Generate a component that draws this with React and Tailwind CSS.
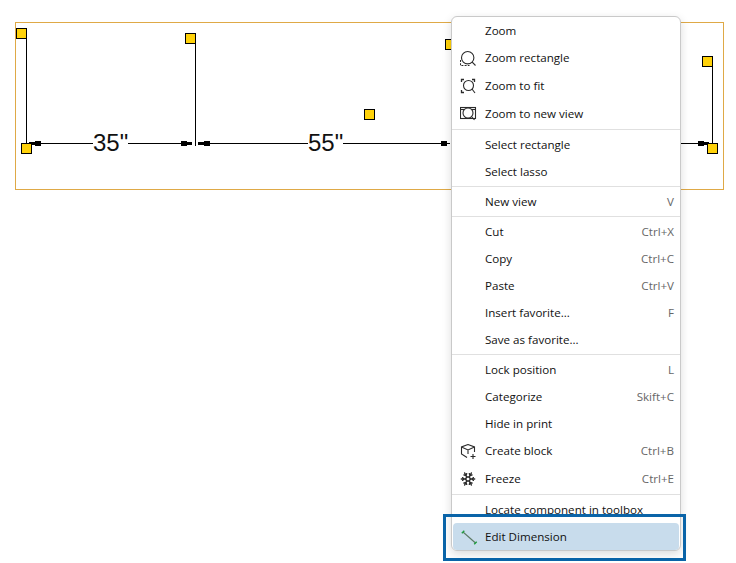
import React from "react";
import { Snowflake } from "lucide-react";

const ZoomRect = () => (
  <svg width="18" height="18" viewBox="0 0 18 18" fill="none" stroke="#2b2b2b" strokeWidth="1.1">
    <circle cx="7.700" cy="8.700" r="6.200" />
    <path d="M12.200 13.200 15.500 16.500" />
    <path d="M.5 11v5.500h9" strokeDasharray="2 1.200" />
  </svg>
);
const ZoomFit = () => (
  <svg width="18" height="18" viewBox="0 0 18 18" fill="none" stroke="#2b2b2b" strokeWidth="1.100">
    <path d="M4 2.500H1.500V5M12 2.500h2.500V5M1.500 13v2.500H4" strokeWidth="1.300" />
    <circle cx="8.500" cy="8.500" r="5" />
    <path d="M12 12 15 16" />
  </svg>
);
const ZoomView = () => (
  <svg width="18" height="18" viewBox="0 0 18 18" fill="none" stroke="#2b2b2b" strokeWidth="1.100">
    <rect x=".5" y="2.500" width="15" height="11" />
    <path d="M.5 4.500h15" />
    <circle cx="8" cy="8" r="5" fill="#fff" />
    <path d="M11.500 11.500 14.500 15" />
  </svg>
);
const Cube = () => (
  <svg width="18" height="18" viewBox="0 0 18 18" fill="none" stroke="#2b2b2b" strokeWidth="1.100">
    <path d="M8 2.500 14.500 5v5M8 2.500 1.500 5v7l5.500 3.500M1.500 5 8 8l6.500-3M8 8v4" />
    <path d="M13 12v5M10.500 14.500h5" />
  </svg>
);
const Dim = () => (
  <svg width="18" height="18" viewBox="0 0 18 18" fill="none">
    <path d="M2 4 14.500 15" stroke="#5c7a64" strokeWidth="1.100" />
    <path d="M.8 5.200 3.300 2.700M13.200 16.300 15.700 13.700" stroke="#1f9d3f" strokeWidth="1.400" />
  </svg>
);

const Row = ({ label, short, icon, tall, active }) => (
  <div
    className={`flex items-center pr-[6px] ${tall ? "h-7" : "h-[27px]"} ${active ? "mx-px rounded bg-[#c8dcec]" : ""}`}
  >
    <span className={`flex justify-center ${active ? "w-[32px]" : "w-[33px]"} shrink-0 pl-px`}>{icon}</span>
    <span className="text-[#111]">{label}</span>
    {short && <span className="ml-auto text-[#666]">{short}</span>}
  </div>
);

const Sep = () => <div className="mt-px mb-px h-px bg-[#e0e0e0]" />;

const Handle = ({ x, y }) => (
  <rect x={x + 0.5} y={y + 0.5} width="10" height="10" fill="#ffd20a" stroke="#000" strokeWidth="1" />
);

const Label = ({ className, children }) => (
  <span className={`absolute top-[105px] bg-white text-[24px] leading-[30px] text-[#111] ${className}`}>
    {children}
  </span>
);

export default function App() {
  return (
    <div className="relative h-[563px] w-[736px] overflow-hidden bg-white pt-[22px] pl-[15px] font-['Open_Sans','Noto_Sans',sans-serif] text-[11.6px]">
      <div className="relative h-[168px] w-[709px] border border-[#dfa946] font-['Liberation_Sans',sans-serif]">
        <svg className="absolute top-0 left-0" width="707" height="166" viewBox="16 23 707 166">
          <g stroke="#000" strokeWidth="1" shapeRendering="crispEdges">
            <path d="M26.500 38V148M195.500 44V146M712.500 67V148M29 143.500H192M198 143.500H450M680 143.500H709" />
          </g>
          <g fill="#000" shapeRendering="crispEdges">
            <rect x="29" y="142" width="7" height="3" />
            <rect x="35" y="141" width="6" height="5" />
            <rect x="181" y="141" width="6" height="5" />
            <rect x="186" y="142" width="6" height="3" />
            <rect x="198" y="142" width="7" height="3" />
            <rect x="204" y="141" width="6" height="5" />
            <rect x="441" y="141" width="6" height="5" />
            <rect x="698" y="141" width="6" height="5" />
            <rect x="703" y="142" width="6" height="3" />
          </g>
          <Handle x={16} y={28} />
          <Handle x={185} y={33} />
          <Handle x={21} y={143} />
          <Handle x={445} y={39} />
          <Handle x={364} y={109} />
          <Handle x={702} y={56} />
          <Handle x={707} y={143} />
        </svg>
        <Label className="left-[77px]">35"</Label>
        <Label className="left-[292px]">55"</Label>
      </div>

      <div className="absolute top-[16px] left-[451px] w-[230px] rounded-md border border-[#c9c9c9] bg-white shadow-[0_3px_10px_rgba(0,0,0,0.14)]">
        <Row label="Zoom" />
        <Row label="Zoom rectangle" tall icon={<ZoomRect />} />
        <Row label="Zoom to fit" tall icon={<ZoomFit />} />
        <Row label="Zoom to new view" tall icon={<ZoomView />} />
        <Sep />
        <Row label="Select rectangle" />
        <Row label="Select lasso" />
        <Sep />
        <Row label="New view" short="V" />
        <Sep />
        <Row label="Cut" short="Ctrl+X" />
        <Row label="Copy" short="Ctrl+C" />
        <Row label="Paste" short="Ctrl+V" />
        <Row label="Insert favorite..." short="F" />
        <Row label="Save as favorite..." />
        <Sep />
        <Row label="Lock position" short="L" />
        <Row label="Categorize" short="Skift+C" />
        <Row label="Hide in print" />
        <Row label="Create block" short="Ctrl+B" tall icon={<Cube />} />
        <Row
          label="Freeze"
          short="Ctrl+E"
          tall
          icon={<Snowflake size={16} strokeWidth={2.2} color="#2b2b2b" className="-ml-[2px]" />}
        />
        <Sep />
        <Row label="Locate component in toolbox" />
        <Row label="Edit Dimension" active icon={<Dim />} />
      </div>

      <div className="absolute top-[514px] left-[443px] h-[47px] w-[243px] border-[3px] border-[#0a64a8]" />
    </div>
  );
}
